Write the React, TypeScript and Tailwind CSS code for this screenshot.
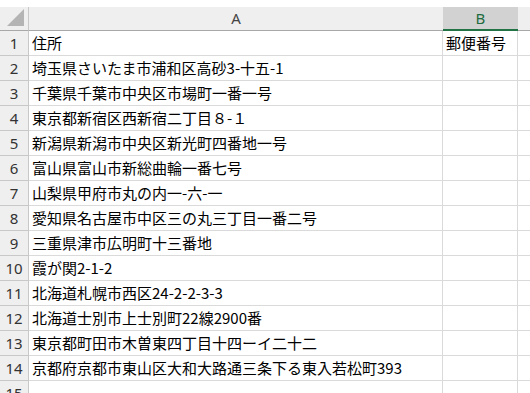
import React from "react";

const rows: string[] = [
  "住所",
  "埼玉県さいたま市浦和区高砂3-十五-1",
  "千葉県千葉市中央区市場町一番一号",
  "東京都新宿区西新宿二丁目８-１",
  "新潟県新潟市中央区新光町四番地一号",
  "富山県富山市新総曲輪一番七号",
  "山梨県甲府市丸の内一-六-一",
  "愛知県名古屋市中区三の丸三丁目一番二号",
  "三重県津市広明町十三番地",
  "霞が関2-1-2",
  "北海道札幌市西区24-2-2-3-3",
  "北海道士別市上士別町22線2900番",
  "東京都町田市木曽東四丁目十四ーイ二十二",
  "京都府京都市東山区大和大路通三条下る東入若松町393",
  "",
];

const jp = "font-['Noto_Sans_CJK_JP','Noto_Sans',sans-serif]";
const ui = "font-['Noto_Sans','Open_Sans',sans-serif]";

export default function App() {
  return (
    <div className="w-[530px] h-[393px] overflow-hidden bg-white">
      {/* top strip */}
      <div className="h-[7px] bg-white" />
      {/* column headers */}
      <div className="flex h-[24px]">
        <div className="w-[29px] bg-[#efefef] border-r border-b border-[#c8c8c8] border-b-[#a8a8a8] flex items-end justify-end pr-[4px] pb-[4px]">
          <div className="w-0 h-0 border-l-[17px] border-l-transparent border-b-[17px] border-b-[#b4b4b4]" />
        </div>
        <div className={`w-[414px] bg-[#efefef] border-b border-[#a8a8a8] flex items-center justify-center text-[15px] text-[#444] ${ui}`}>
          A
        </div>
        <div className={`w-[75px] bg-[#d2d2d2] border-b-2 border-[#217346] flex items-center justify-center text-[15px] text-[#1e6b3f] ${ui}`}>
          B
        </div>
        <div className="flex-1 bg-[#efefef] border-b border-[#a8a8a8]" />
      </div>
      {/* rows */}
      {rows.map((text, i) => (
        <div key={i} className="flex h-[25px]">
          <div className={`w-[29px] shrink-0 bg-[#efefef] border-r border-b border-[#c8c8c8] flex items-center justify-center text-[15px] text-[#333] ${ui}`}>
            {i + 1}
          </div>
          <div className={`w-[414px] shrink-0 border-r border-b border-[#dadada] flex items-center pl-[3px] whitespace-nowrap text-[15px] text-black ${jp}`}>
            {text}
          </div>
          <div className={`w-[75px] shrink-0 border-r border-b border-[#dadada] flex items-center pl-[3px] whitespace-nowrap overflow-hidden text-[15px] text-black ${jp}`}>
            {i === 0 ? "郵便番号" : ""}
          </div>
          <div className="flex-1 border-b border-[#dadada]" />
        </div>
      ))}
    </div>
  );
}
